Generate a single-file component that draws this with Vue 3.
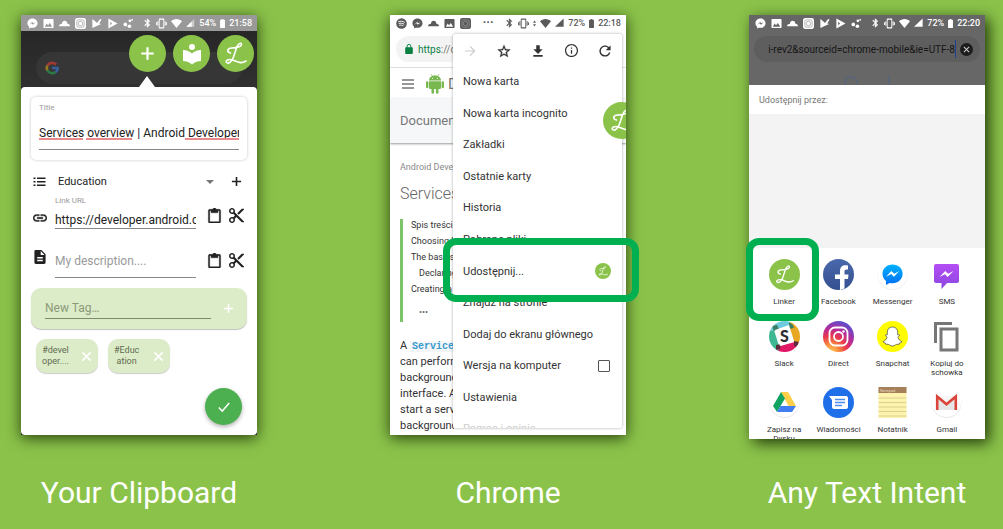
<script setup>
import { ref } from 'vue'

const title = ref('Services overview | Android Developers')
const category = ref('Education')
const link = ref('https://developer.android.com/guide')
const description = ref('')
const newTag = ref('')
const desktop = ref(false)
const query = ref('i-rev2&sourceid=chrome-mobile&ie=UTF-8')

const notifications = ['messenger', 'image', 'cloud', 'camera', 'playcheck', 'play', 'dots']
const chromeNotifications = ['spotify', 'messenger', 'cloud', 'image', 'camera']
const tags = [['#devel', 'oper....'], ['#Educ', 'ation']]
const menuBefore = ['Nowa karta', 'Nowa karta incognito', 'Zakładki', 'Ostatnie karty', 'Historia', 'Pobrane pliki']
const apps = [
  { icon: 'linker', name: 'Linker' },
  { icon: 'facebook', name: 'Facebook' },
  { icon: 'messenger-app', name: 'Messenger' },
  { icon: 'sms', name: 'SMS' },
  { icon: 'slack', name: 'Slack' },
  { icon: 'instagram', name: 'Direct' },
  { icon: 'snapchat', name: 'Snapchat' },
  { icon: 'copy', name: 'Kopiuj do schowka' },
  { icon: 'drive', name: 'Zapisz na Dysku' },
  { icon: 'messages', name: 'Wiadomości' },
  { icon: 'notepad', name: 'Notatnik' },
  { icon: 'gmail', name: 'Gmail' }
]
</script>

<template>
  <svg class="sprite" aria-hidden="true">
    <defs>
      <linearGradient id="fb" x1="0" y1="0" x2="0" y2="1"><stop offset="0" stop-color="#4a68ad" /><stop offset="1" stop-color="#35508f" /></linearGradient>
      <linearGradient id="ms" x1="0" y1="0" x2="0" y2="1"><stop offset="0" stop-color="#00b2ff" /><stop offset="1" stop-color="#0070f5" /></linearGradient>
      <linearGradient id="sm" x1="0" y1="0" x2="0" y2="1"><stop offset="0" stop-color="#b44df5" /><stop offset="1" stop-color="#8b47e0" /></linearGradient>
      <radialGradient id="ig" cx="0.25" cy="1" r="1.05"><stop offset="0" stop-color="#fed05c" /><stop offset="0.25" stop-color="#f88a3c" /><stop offset="0.5" stop-color="#e8364f" /><stop offset="0.72" stop-color="#b52c9b" /><stop offset="1" stop-color="#5a4fd0" /></radialGradient>
      <clipPath id="disc"><circle cx="15.500" cy="15.500" r="15.500" /></clipPath>
    </defs>
    <symbol id="i-messenger" viewBox="0 0 24 24"><path fill-rule="evenodd" d="M12 1C5.500 1 1 5.700 1 11.500c0 3.100 1.400 5.800 3.700 7.600V23l3.600-2c1.100.3 2.400.5 3.700.5 6.500 0 11-4.500 11-10S18.500 1 12 1zM5 14.500l6-6 3 3 5-3-6 6-3-3z" /></symbol>
    <symbol id="i-image" viewBox="0 0 24 24"><path fill-rule="evenodd" d="M23 20V4c0-1.100-.9-2-2-2H3c-1.100 0-2 .9-2 2v16c0 1.100.9 2 2 2h18c1.100 0 2-.9 2-2zM8 12l3 4 4-5 5 8H4z" /></symbol>
    <symbol id="i-cloud" viewBox="0 0 24 24"><path d="M0 18c0-4 3-5 6-5 1-5 3-7 6-7 4 0 6 3 6 6 4 1 6 3 6 6z" /></symbol>
    <symbol id="i-camera" viewBox="0 0 24 24"><rect x="0" y="0" width="24" height="24" rx="5" fill="currentColor" /><rect x="4" y="4" width="16" height="16" rx="4" fill="none" stroke="#999" stroke-width="1.500" /><circle cx="12" cy="12" r="5" fill="none" stroke="#999" stroke-width="1.500" /></symbol>
    <symbol id="i-playcheck" viewBox="0 0 24 24"><path d="M3 2v20l19-9-4-1 5-9-3-1-7 9-4-4z" /></symbol>
    <symbol id="i-play" viewBox="0 0 24 24"><path fill-rule="evenodd" d="M3 1l20 11L3 23zM7 8v8l4-4z" /></symbol>
    <symbol id="i-dots" viewBox="0 0 24 24"><circle cx="5" cy="14" r="4" /><circle cx="15" cy="6" r="3" /><circle cx="14" cy="18" r="4" /><circle cx="20" cy="4" r="2" /></symbol>
    <symbol id="i-spotify" viewBox="0 0 24 24"><circle cx="12" cy="12" r="11.500" /><path d="M5 8c5-1.500 10-1 14 1.500M6 12c4-1 8-.5 12 1.500M7 16c3-1 6-.5 9 1" fill="none" stroke="#fff" stroke-width="2" /></symbol>
    <symbol id="i-bluetooth" viewBox="4 0 16 24"><path d="M17.710 7.710L12 2h-1v7.590L6.410 5 5 6.410 10.590 12 5 17.590 6.410 19 11 14.410V22h1l5.710-5.710-4.300-4.290zM13 5.830l1.880 1.880L13 9.590zm1.880 10.460L13 18.170v-3.760z" stroke="currentColor" /></symbol>
    <symbol id="i-vibrate" viewBox="0 0 24 24"><path fill-rule="evenodd" d="M0 15h2V9H0zm3 2h2V7H3zm19-8v6h2V9zm-3 8h2V7h-2zM16.500 1h-9C6.700 1 6 1.700 6 2.500v19c0 .8.700 1.500 1.500 1.500h9c.8 0 1.500-.7 1.500-1.500v-19c0-.8-.7-1.500-1.500-1.500zM16 20H8V4h8z" /></symbol>
    <symbol id="i-updown" viewBox="0 0 8 24"><path d="M0 10l4-6 4 6zm0 4l4 6 4-6z" /></symbol>
    <symbol id="i-wifi" viewBox="0 0 24 24"><path d="M12 22L0 7c3.500-3 7.500-5 12-5s8.500 2 12 5z" /></symbol>
    <symbol id="i-signal" viewBox="0 0 24 24"><path d="M1 22h21V1z" opacity=".5" /><path d="M1 22h14V8z" /></symbol>
    <symbol id="i-signalfull" viewBox="0 0 24 24"><path d="M0 22h23V0z" /></symbol>
    <symbol id="i-battery" viewBox="0 0 12 22"><path d="M4 0h4v2h3q1 0 1 1v18q0 1-1 1H1q-1 0-1-1V3q0-1 1-1h3z" /></symbol>
    <symbol id="i-google" viewBox="0 0 24 24"><g fill="none" stroke-width="4.500"><path d="M19 6A9.500 9.500 0 0 0 4 8" stroke="#9c3a33" /><path d="M4 8a9.500 9.500 0 0 0 0 8" stroke="#9a7a20" /><path d="M4 16a9.500 9.500 0 0 0 14 3" stroke="#2c7a43" /><path d="M18 19c3-2 4-5 3.500-7H12" stroke="#38609f" /></g></symbol>
    <symbol id="i-plus" viewBox="0 0 24 24"><path d="M12 2v20M2 12h20" fill="none" stroke="currentColor" stroke-width="3.500" /></symbol>
    <symbol id="i-close" viewBox="0 0 24 24"><path d="M3 3l18 18M21 3L3 21" fill="none" stroke="currentColor" stroke-width="3.500" /></symbol>
    <symbol id="i-check" viewBox="0 0 24 24"><path d="M3 13l6 6L21 5" fill="none" stroke="currentColor" stroke-width="2.500" /></symbol>
    <symbol id="i-library" viewBox="0 0 24 24"><path d="M12 11.550C9.640 9.350 6.480 8 3 8v11c3.480 0 6.640 1.350 9 3.550 2.360-2.190 5.520-3.550 9-3.550V8c-3.480 0-6.640 1.350-9 3.550zM12 8a3 3 0 1 0 0-6 3 3 0 0 0 0 6z" /></symbol>
    <symbol id="i-script" viewBox="0 0 37 37"><path d="M13.500 18C9.500 17 10 13.500 14.500 13c5-.3 10-1 10-3.500C24.300 7 21 8.500 19.500 13l-3 9c-1.500 4.500-5 7.300-7 5.500-1.300-2 2-3.700 6-2.500 4.500 1.500 8 4.500 13.500 1" fill="none" stroke="#fff" stroke-width="1.600" stroke-linecap="round" /></symbol>
    <symbol id="i-list" viewBox="0 0 24 20"><path d="M0 1h4v3H0zm7 0h17v3H7zM0 8h4v3H0zm7 0h17v3H7zM0 15h4v3H0zm7 0h17v3H7z" /></symbol>
    <symbol id="i-link" viewBox="2 5 20 14"><path d="M3.900 12c0-1.710 1.390-3.100 3.100-3.100h4V7H7c-2.760 0-5 2.240-5 5s2.240 5 5 5h4v-1.900H7c-1.710 0-3.100-1.390-3.100-3.100zM8 13h8v-2H8zm9-6h-4v1.900h4c1.710 0 3.100 1.390 3.100 3.100s-1.390 3.100-3.100 3.100h-4V17h4c2.760 0 5-2.240 5-5s-2.240-5-5-5z" stroke="currentColor" stroke-width=".5" /></symbol>
    <symbol id="i-paste" viewBox="2 0 20 22"><path d="M19 2h-4.180C14.400.84 13.300 0 12 0c-1.300 0-2.400.84-2.820 2H5c-1.100 0-2 .9-2 2v16c0 1.100.9 2 2 2h14c1.100 0 2-.9 2-2V4c0-1.100-.9-2-2-2zm0 18H5V4h2v3h10V4h2z" stroke="currentColor" stroke-width=".6" /></symbol>
    <symbol id="i-cut" viewBox="2 2 20 20"><path d="M9.640 7.640c.23-.5.36-1.050.36-1.640 0-2.210-1.790-4-4-4S2 3.790 2 6s1.790 4 4 4c.59 0 1.140-.13 1.640-.36L10 12l-2.360 2.360C7.140 14.130 6.590 14 6 14c-2.210 0-4 1.790-4 4s1.790 4 4 4 4-1.790 4-4c0-.59-.13-1.140-.36-1.640L12 14l7 7h3v-1zM6 8c-1.100 0-2-.89-2-2s.9-2 2-2 2 .89 2 2-.9 2-2 2zm0 12c-1.100 0-2-.89-2-2s.9-2 2-2 2 .89 2 2-.9 2-2 2zM19 3l-6 6 2 2 7-7V3z" /></symbol>
    <symbol id="i-doc" viewBox="4 2 16 20"><path fill-rule="evenodd" d="M14 2H6c-1.100 0-2 .9-2 2v16c0 1.100.9 2 2 2h12c1.100 0 2-.9 2-2V8zm2 16H8v-2h8zm0-4H8v-2h8zm-3-5V3.500L18.500 9z" /></symbol>
    <symbol id="i-forward" viewBox="0 0 24 24"><path d="M3 12h17M12 4l8 8-8 8" fill="none" stroke="currentColor" stroke-width="2" /></symbol>
    <symbol id="i-star" viewBox="1 1 22 21"><path d="M22 9.240l-7.190-.62L12 2 9.190 8.630 2 9.240l5.460 4.730L5.820 21 12 17.270 18.180 21l-1.630-7.030zM12 15.400l-3.760 2.270 1-4.280-3.320-2.880 4.380-.38L12 6.100l1.710 4.040 4.380.38-3.320 2.880 1 4.280z" stroke="currentColor" stroke-width=".5" /></symbol>
    <symbol id="i-download" viewBox="0 0 24 24"><path d="M20 9h-5V2H9v7H4l8 8zM4 19v3h16v-3z" /></symbol>
    <symbol id="i-info" viewBox="0 0 24 24"><path d="M11 17h2v-6h-2zm1-15.500C6.200 1.500 1.500 6.200 1.500 12S6.200 22.500 12 22.500 22.500 17.800 22.500 12 17.800 1.500 12 1.500zm0 19c-4.700 0-8.500-3.800-8.500-8.500S7.300 3.500 12 3.500s8.500 3.800 8.500 8.500-3.800 8.500-8.500 8.500zM11 9h2V7h-2z" fill-rule="evenodd" /></symbol>
    <symbol id="i-refresh" viewBox="2 2 20 20"><path d="M17.650 6.350C16.200 4.900 14.210 4 12 4c-4.420 0-7.990 3.580-7.990 8s3.570 8 7.990 8c3.730 0 6.840-2.550 7.730-6h-2.080c-.82 2.330-3.040 4-5.650 4-3.310 0-6-2.690-6-6s2.690-6 6-6c1.660 0 3.140.69 4.220 1.780L13 11h7V4z" /></symbol>
    <symbol id="i-lock" viewBox="4 1 16 21"><path d="M18 8h-1V6c0-2.760-2.240-5-5-5S7 3.240 7 6v2H6c-1.100 0-2 .9-2 2v10c0 1.100.9 2 2 2h12c1.100 0 2-.9 2-2V10c0-1.100-.9-2-2-2zm-2.900 0H8.900V6c0-1.710 1.390-3.100 3.100-3.100s3.100 1.390 3.100 3.100z" /></symbol>
    <symbol id="i-burger" viewBox="0 0 12 10"><path d="M0 1h12M0 5h12M0 9h12" stroke="currentColor" stroke-width="1.500" /></symbol>
    <symbol id="i-android" viewBox="0 0 18 20"><path d="M3 6.500C3 3.500 5.700 1.500 9 1.500s6 2 6 5zM3 7.300h12V14q0 1-1 1h-1.500v3.500a1.300 1.300 0 0 1-2.600 0V15H8.100v3.500a1.300 1.300 0 0 1-2.600 0V15H4q-1 0-1-1zM0 8.500a1.200 1.200 0 0 1 2.400 0V13A1.200 1.200 0 0 1 0 13zM15.600 8.500a1.200 1.200 0 0 1 2.400 0V13a1.200 1.200 0 0 1-2.400 0z" /><path d="M5 0l1.500 2.500M13 0l-1.500 2.500" stroke="currentColor" stroke-width=".6" /><circle cx="6.500" cy="4.300" r=".6" fill="#fff" /><circle cx="11.500" cy="4.300" r=".6" fill="#fff" /></symbol>

    <symbol id="i-linker" viewBox="0 0 37 37"><circle cx="18.500" cy="18.500" r="18.500" fill="#8bc34a" /><use href="#i-script" width="37" height="37" /></symbol>
    <symbol id="i-facebook" viewBox="0 0 31 31"><circle cx="15.500" cy="15.500" r="15.500" fill="url(#fb)" /><path d="M17 31V20h-5v-4.500h5V12c0-4.500 3-6.500 8-5.600v4.100c-3-.3-3.500.6-3.500 2.300v2.700h4L25 20h-3.500v9.500z" fill="#fff" /></symbol>
    <symbol id="i-messenger-app" viewBox="0 0 31 31"><circle cx="15.500" cy="16" r="15" fill="#ececec" /><circle cx="15.500" cy="15.200" r="14.800" fill="#fff" /><path d="M15.500 5.500c-5.700 0-10 4-10 9.200 0 3 1.300 5.500 3.500 7.200v4l3.600-2c1 .2 1.900.3 2.900.3 5.700 0 10.100-4.200 10.100-9.500s-4.400-9.200-10.100-9.200z" fill="url(#ms)" /><path d="M9 17.700l5.300-5.600 3 2.600 5-2.600-5.400 5.600-2.700-2.600z" fill="#fff" /></symbol>
    <symbol id="i-sms" viewBox="0 0 31 31"><path d="M5 5h21q2 0 2 2v15q0 2-2 2H16l-5.500 6v-6H5q-2 0-2-2V7q0-2 2-2z" fill="url(#sm)" /><path d="M8.500 18l5.700-6 3 2.800 5.300-2.800-5.800 6-2.700-2.700z" fill="#fff" /></symbol>
    <symbol id="i-slack" viewBox="0 0 31 31"><g clip-path="url(#disc)"><path d="M0 0h31v31H0z" fill="#fff" /><path d="M0 0h21L20 5 6 9 0 10z" fill="#6ecadc" /><path d="M21 0h10v22l-6-1-5-14z" fill="#e8a723" /><path d="M31 22v9H8l3-6 15-4z" fill="#e01765" /><path d="M0 10l5-1 5 16-1 6H0z" fill="#3db892" /><path d="M3 5l5-1 2 4-5 2zM20 1l4 3 1 3-5 1z" fill="#3a7f66" /><path d="M25 20l5 1-2 5-3-1zM7 24l5-1-1 5-4 1z" fill="#5e2d3d" /><path d="M6 9l14-5 5 16-14 5z" fill="#fff" /></g><text x="15.500" y="21" text-anchor="middle" font-family="Lato, sans-serif" font-weight="900" font-size="16" fill="#2b2b30">S</text></symbol>
    <symbol id="i-instagram" viewBox="0 0 31 31"><circle cx="15.500" cy="15.500" r="15.500" fill="url(#ig)" /><g fill="none" stroke="#fff" stroke-width="1.800"><rect x="6.500" y="6.500" width="18" height="18" rx="5.500" /><circle cx="15.500" cy="15.500" r="4.500" /></g><circle cx="20.500" cy="10.500" r="1.200" fill="#fff" /></symbol>
    <symbol id="i-snapchat" viewBox="0 0 31 31"><circle cx="15.500" cy="15.500" r="15.500" fill="#fffc00" /><path d="M15.500 6c-3.300 0-5.200 2.300-5.200 5.200v2.600c-.8.3-1.700-.5-1.900.4-.1.900 1.500 1.200 1.700 2-.7 2.300-2 3.600-4 4.300-.3 1 1.700 1.400 2.500 1.600l.4 1.300c1.300 0 2.300-.3 3.400.4 1 .7 1.800 1.300 3.100 1.300s2.100-.6 3.100-1.300c1.100-.7 2.100-.4 3.400-.4l.4-1.300c.8-.2 2.800-.6 2.500-1.600-2-.7-3.300-2-4-4.300.2-.8 1.800-1.100 1.700-2-.2-.9-1.100-.1-1.900-.4v-2.600c0-2.900-1.900-5.200-5.200-5.200z" fill="#fff" stroke="#555" stroke-width=".8" /></symbol>
    <symbol id="i-copy" viewBox="0 0 31 31"><path d="M4.500 22V2.500H21M10 8h16v21H10z" fill="none" stroke="#777" stroke-width="3" /></symbol>
    <symbol id="i-drive" viewBox="0 0 31 31"><circle cx="15.500" cy="16" r="15" fill="#e4e4e4" /><circle cx="15.500" cy="15.200" r="14.800" fill="#fff" /><path d="M12 5h7l8 14h-7.500z" fill="#ffcf48" /><path d="M12 5l4 6.500L8 25l-4-6z" fill="#11a361" /><path d="M11.500 19H27l-4 6H8z" fill="#3f7df0" /></symbol>
    <symbol id="i-messages" viewBox="0 0 31 31"><circle cx="15.500" cy="15.500" r="15.500" fill="#1f70e8" /><path d="M6 9h17q2 0 2 2v9q0 2-2 2H11q-2 0-2-2v-7z" fill="#fff" /><path d="M12 12.500h10M12 15.500h10M12 18.500h7" stroke="#4c8cf0" stroke-width="1.300" /></symbol>
    <symbol id="i-notepad" viewBox="0 0 31 31"><path d="M1.500 0h28v31h-28z" fill="#fbf3ae" /><path d="M1.500 0h28v6h-28z" fill="#a5805a" /><path d="M1.500 11h28M1.500 15.500h28M1.500 20h28M1.500 24.500h28M1.500 29h28" stroke="#ded08a" stroke-width="1" /><text x="3" y="4.500" font-family="Roboto, sans-serif" font-size="4" fill="#ead9bd">Notepad</text></symbol>
    <symbol id="i-gmail" viewBox="0 0 31 31"><circle cx="15.500" cy="16" r="15" fill="#e4e4e4" /><circle cx="15.500" cy="15.200" r="14.800" fill="#fff" /><path d="M6 9h19v14H6z" fill="#e6e6e6" /><path d="M6 9h19l-9.500 8z" fill="#f6f6f6" /><path d="M6.200 23V9.500l9.300 7.800 9.300-7.800V23" fill="none" stroke="#d9453a" stroke-width="2.600" /></symbol>
  </svg>

  <main class="page">
    <figure class="shot clipboard">
      <div class="device">
        <div class="screen">
          <div class="status light">
            <span class="group"><svg v-for="n in notifications" :key="n" class="s11"><use :href="'#i-' + n" /></svg></span>
            <span class="group tight">
              <svg class="s9"><use href="#i-bluetooth" /></svg><svg class="s11"><use href="#i-vibrate" /></svg><svg class="s11"><use href="#i-wifi" /></svg><svg class="s9"><use href="#i-signal" /></svg>
              <span>54%</span><svg class="batt"><use href="#i-battery" /></svg><time>21:58</time>
            </span>
          </div>
          <div class="hero">
            <div class="searchpill"><svg class="s14"><use href="#i-google" /></svg></div>
            <button class="round active" aria-label="Add"><svg class="s15"><use href="#i-plus" /></svg></button>
            <button class="round" aria-label="Library"><svg class="s24"><use href="#i-library" /></svg></button>
            <button class="round" aria-label="Linker"><svg class="s37"><use href="#i-script" /></svg></button>
          </div>
          <form class="sheet" @submit.prevent>
            <div class="card">
              <label for="title">Title</label>
              <div class="spell">
                <input id="title" v-model="title" class="line" type="text" />
                <span class="marks"><i class="w44"></i><i class="w46"></i><i class="last"></i></span>
              </div>
            </div>
            <div class="row category">
              <svg class="listicon"><use href="#i-list" /></svg>
              <div class="pick">
                <select v-model="category" aria-label="Category"><option>Education</option></select>
              </div>
              <button class="bare" aria-label="Add category"><svg class="s11"><use href="#i-plus" /></svg></button>
            </div>
            <div class="row url">
              <svg class="linkicon"><use href="#i-link" /></svg>
              <div class="field"><label for="url">Link URL</label><input id="url" v-model="link" class="line" type="text" /></div>
              <button class="bare" aria-label="Paste link"><svg class="s15"><use href="#i-paste" /></svg></button>
              <button class="bare" aria-label="Cut link"><svg class="s15"><use href="#i-cut" /></svg></button>
            </div>
            <div class="row desc">
              <svg class="s14"><use href="#i-doc" /></svg>
              <input v-model="description" class="line" type="text" aria-label="Description" placeholder="My description...." />
              <button class="bare" aria-label="Paste description"><svg class="s15"><use href="#i-paste" /></svg></button>
              <button class="bare" aria-label="Cut description"><svg class="s15"><use href="#i-cut" /></svg></button>
            </div>
            <div class="newtag">
              <input v-model="newTag" class="line" type="text" aria-label="New tag" placeholder="New Tag…" />
              <button class="bare white" aria-label="Add tag"><svg class="s11"><use href="#i-plus" /></svg></button>
            </div>
            <div class="chips">
              <span v-for="t in tags" :key="t[0]" class="chip">
                <span>{{ t[0] }}<br />{{ t[1] }}</span>
                <button class="bare white" :aria-label="'Remove ' + t[0] + t[1]"><svg class="s11"><use href="#i-close" /></svg></button>
              </span>
            </div>
            <button class="fab" aria-label="Save"><svg class="s14"><use href="#i-check" /></svg></button>
          </form>
        </div>
      </div>
      <figcaption>Your Clipboard</figcaption>
    </figure>

    <figure class="shot chrome">
      <div class="device">
        <div class="screen">
          <div class="status dark">
            <span class="group"><svg v-for="n in chromeNotifications" :key="n" class="s11"><use :href="'#i-' + n" /></svg></span>
            <span class="more">···</span>
            <span class="group tight">
              <svg class="s9"><use href="#i-bluetooth" /></svg><svg class="s11"><use href="#i-vibrate" /></svg><svg class="arrows"><use href="#i-updown" /></svg><svg class="s11"><use href="#i-wifi" /></svg><svg class="s9"><use href="#i-signalfull" /></svg>
              <span>72%</span><svg class="batt"><use href="#i-battery" /></svg><time>22:18</time>
            </span>
          </div>
          <div class="toolbar"><div class="omnibox"><svg class="lock"><use href="#i-lock" /></svg><span><b>https</b>://d</span></div></div>
          <div class="site"><svg class="burger"><use href="#i-burger" /></svg><svg class="android"><use href="#i-android" /></svg><span class="brand">D</span></div>
          <div class="band">Documen</div>
          <article>
            <p class="crumb">Android Devel</p>
            <h1>Services</h1>
            <ul class="toc">
              <li>Spis treści</li><li>Choosing b</li><li>The basics</li><li class="in">Declaring</li><li>Creating a s</li><li class="in dots">•••</li>
            </ul>
            <p class="body">A <code>Service</code><br />can perform<br />background<br />interface. A<br />start a serv<br />background</p>
          </article>
          <nav class="menu" aria-label="Chrome">
            <div class="actions">
              <button class="bare pale" aria-label="Dalej"><svg class="s14"><use href="#i-forward" /></svg></button>
              <button class="bare" aria-label="Zakładka"><svg class="s14"><use href="#i-star" /></svg></button>
              <button class="bare" aria-label="Pobierz"><svg class="s14"><use href="#i-download" /></svg></button>
              <button class="bare" aria-label="Informacje"><svg class="s15"><use href="#i-info" /></svg></button>
              <button class="bare" aria-label="Odśwież"><svg class="s14"><use href="#i-refresh" /></svg></button>
            </div>
            <ul class="items">
              <li v-for="m in menuBefore" :key="m"><a href="#">{{ m }}</a></li>
              <li><a href="#">Udostępnij...<svg class="s16"><use href="#i-linker" /></svg></a></li>
              <li><a href="#">Znajdź na stronie</a></li>
              <li><a href="#">Dodaj do ekranu głównego</a></li>
              <li><label>Wersja na komputer<input v-model="desktop" type="checkbox" /></label></li>
              <li><a href="#">Ustawienia</a></li>
              <li class="fading"><a href="#">Pomoc i opinie</a></li>
            </ul>
          </nav>
          <button class="round floating" aria-label="Linker"><svg class="s37"><use href="#i-script" /></svg></button>
        </div>
        <div class="ring share"></div>
      </div>
      <figcaption>Chrome</figcaption>
    </figure>

    <figure class="shot intent">
      <div class="device">
        <div class="screen">
          <div class="status light dim">
            <span class="group"><svg v-for="n in notifications" :key="n" class="s11"><use :href="'#i-' + n" /></svg></span>
            <span class="group tight">
              <svg class="s9"><use href="#i-bluetooth" /></svg><svg class="s11"><use href="#i-vibrate" /></svg><svg class="s11"><use href="#i-wifi" /></svg><svg class="s9"><use href="#i-signalfull" /></svg>
              <span>72%</span><svg class="batt"><use href="#i-battery" /></svg><time>22:20</time>
            </span>
          </div>
          <div class="dimmed">
            <div class="address">
              <input v-model="query" type="text" aria-label="Address" />
              <button class="clear" aria-label="Clear"><svg class="s7"><use href="#i-close" /></svg></button>
            </div>
            <div class="doodle" aria-hidden="true"><i></i><i></i></div>
          </div>
          <h2>Udostępnij przez:</h2>
          <div class="blank"></div>
          <ul class="apps">
            <li v-for="a in apps" :key="a.name"><a href="#"><svg class="s31"><use :href="'#i-' + a.icon" /></svg><span>{{ a.name }}</span></a></li>
          </ul>
        </div>
        <div class="ring linker"></div>
      </div>
      <figcaption>Any Text Intent</figcaption>
    </figure>
  </main>
</template>

<style>
body { margin: 0; background: #8bc34a; }
</style>

<style scoped>
* { box-sizing: border-box; }
.sprite { position: absolute; width: 0; height: 0; }
.page {
  display: grid;
  grid-template-columns: 21fr 236fr 133fr 236fr 123fr 236fr 18fr;
  min-height: 100vh;
  padding: 15px 0 18px;
  background: #8bc34a;
  font-family: Roboto, "Noto Sans", sans-serif;
  color: #333;
  overflow: hidden;
}
.shot { margin: 0; display: flex; flex-direction: column; min-width: 0; }
.clipboard { grid-column: 2; }
.chrome { grid-column: 4; }
.intent { grid-column: 6; }
figcaption { margin-top: auto; line-height: 36px; font-size: 30px; color: #fff; text-align: center; white-space: nowrap; }
.device { position: relative; box-shadow: 0 3px 14px rgba(20, 40, 0, .85); }
.intent .device { box-shadow: 4px 4px 14px rgba(20, 40, 0, .9); }
.screen { position: relative; overflow: hidden; background: #fff; }
.clipboard .screen { background: #222; }
svg { display: block; flex: none; fill: currentColor; }
button, input, select { font-family: inherit; margin: 0; padding: 0; border: 0; color: inherit; outline: none; }
a { color: inherit; text-decoration: none; }
ul, p, h1, h2 { margin: 0; padding: 0; list-style: none; font-weight: 400; }

.s7 { width: 7px; height: 7px; }
.s9 { width: 9px; height: 10px; }
.s11 { width: 11px; height: 11px; }
.s14 { width: 14px; height: 14px; }
.s15 { width: 15px; height: 15px; }
.s16 { width: 16px; height: 16px; }
.s24 { width: 24px; height: 24px; }
.s31 { width: 31px; height: 31px; }
.s37 { width: 37px; height: 37px; }
.batt { width: 5px; height: 9px; }
.arrows { width: 3px; height: 9px; }

.status { display: flex; align-items: center; justify-content: space-between; height: 16px; padding: 0 5px 0 6px; font-size: 9px; font-weight: 500; line-height: 16px; }
.group { display: flex; align-items: center; gap: 5px; }
.group.tight { gap: 4px; }
.light { color: #fff; background: #999; }
.dark { color: #5a5a5a; }
.dim { background: #666; }
.more { font-size: 12px; font-weight: 700; }

.hero { position: relative; display: flex; justify-content: flex-end; gap: 7px; height: 56px; padding: 4px 3px 0 0; background: linear-gradient(#272727, #303030); }
.searchpill { position: absolute; left: 15px; right: 15px; top: 21px; height: 32px; padding: 9px; border-radius: 16px; background: #363636; }
.round { position: relative; width: 37px; height: 37px; display: grid; place-items: center; border-radius: 50%; background: #8bc34a; color: #fff; }
.round.active::after { content: ""; position: absolute; top: 41px; left: 10px; border: 8px solid transparent; border-top: 0; border-bottom: 11px solid #fff; }
.sheet { display: flex; flex-direction: column; padding: 10px 10px 10px; background: #fff; border-radius: 4px; color: #222; }
.sheet label { display: block; font-size: 8px; line-height: 10px; color: #999; }
.line { display: block; width: 100%; height: 18px; background: none; border-bottom: 1px solid #888; border-radius: 0; font-size: 12px; }
.line::placeholder { color: #999; opacity: 1; }
.card { padding: 6px 8px 10px; border-radius: 5px; box-shadow: 0 0 3px rgba(0, 0, 0, .25); }
.spell { position: relative; margin-top: 11px; }
.spell .line { height: 26px; padding-bottom: 7px; }
.marks { position: absolute; left: 0; right: 0; top: 14px; display: flex; gap: 3px; }
.marks i { height: 2px; background: #e88a8c; }
.w44 { width: 44px; }
.w46 { width: 46px; }
.last { width: 54px; margin-left: auto; }
.row { display: grid; grid-template-columns: 14px minmax(0, 1fr) 33px 15px; padding: 0 3px 0 2px; }
.bare { display: grid; place-items: center; background: none; color: #222; }
.white { color: #fff; }
.pale { color: #ccc !important; }
.row.category { grid-template-columns: 14px minmax(0, 1fr) 15px; column-gap: 8px; align-items: center; height: 17px; margin-top: 13px; }
.listicon { width: 13px; height: 10px; }
.pick { position: relative; margin-right: 7px; }
.pick::after { content: ""; position: absolute; right: 0; top: 7px; border: 4px solid transparent; border-top-color: #777; border-bottom: 0; }
.pick select { display: block; width: 100%; height: 17px; padding-left: 3px; appearance: none; background: none; font-size: 11px; }
.url { margin-top: 6px; align-items: end; }
.field { min-width: 0; }
.url .field, .desc .line { margin-left: 8px; width: auto; }
.url .line { height: 18px; margin-top: 5px; }
.url .bare, .desc .bare { margin-left: 11px; width: 15px; }
.url .bare:last-child, .desc .bare:last-child { margin-left: 0; width: 15px; }
.url .bare { margin-bottom: 6px; }
.linkicon { width: 14px; height: 10px; margin-bottom: 6px; }
.desc { margin-top: 21px; align-items: start; }
.desc .line { height: 28px; padding-bottom: 5px; }
.desc .bare { margin-top: 3px; }
.newtag { display: flex; align-items: center; gap: 12px; height: 41px; margin-top: 10px; padding: 0 13px 0 14px; border-radius: 10px; background: #dcebc8; box-shadow: 0 1px 1px rgba(0, 0, 0, .25); }
.newtag .line { flex: 1; min-width: 0; height: 20px; border-color: #7d8a6c; }
.newtag .line::placeholder { color: #8b9a79; }
.chips { display: flex; gap: 10px; margin-top: 10px; padding-left: 5px; }
.chip { display: flex; align-items: center; justify-content: space-between; width: 62px; height: 34px; padding: 0 6px; border-radius: 10px; background: #dcebc8; box-shadow: 0 1px 1px rgba(0, 0, 0, .2); font-size: 9px; line-height: 11px; text-align: center; color: #5f6b52; }
.fab { width: 37px; height: 37px; margin: 15px 5px 0 auto; display: grid; place-items: center; border-radius: 50%; background: #4caf50; color: #fff; box-shadow: 0 2px 4px rgba(0, 0, 0, .3); }

.toolbar { padding: 5px 6px; border-bottom: 1px solid #ddd; }
.omnibox { display: flex; align-items: center; gap: 5px; height: 26px; padding: 0 9px; border-radius: 13px; background: #f3f3f3; white-space: nowrap; font-size: 10px; color: #777; }
.omnibox b { color: #0b8043; font-weight: 400; }
.lock { width: 8px; height: 10px; color: #0b8043; }
.site { display: flex; align-items: center; height: 30px; padding: 2px 12px 0; font-size: 15px; color: #777; }
.burger { width: 12px; height: 10px; }
.android { width: 18px; height: 20px; margin: 0 4px 0 12px; color: #78b84e; }
.brand { width: 5px; overflow: hidden; }
.band { padding-left: 10px; height: 45px; line-height: 45px; background: #f6f7f8; box-shadow: 0 1px 2px rgba(0, 0, 0, .4); font-size: 13px; color: #777; }
article { width: 64px; overflow: hidden; padding: 18px 0 1px 10px; white-space: nowrap; }
.crumb { font-size: 9px; line-height: 12px; color: #888; }
h1 { margin-top: 9px; font-size: 16px; line-height: 24px; font-weight: 300; color: #666; }
.toc { display: flex; flex-direction: column; gap: 4px; margin-top: 13px; padding: 0 0 4px 8px; border-left: 3px solid #7cc36a; font-size: 9px; line-height: 12px; }
.in { padding-left: 8px; }
.dots { margin-top: 7px; color: #666; }
.body { margin-top: 16px; font-size: 11px; line-height: 16px; }
code { font: 700 10px/12px "Liberation Mono", monospace; color: #3a9bd0; background: #f5f6f7; padding: 0 2px; }
.menu { position: absolute; top: 19px; right: 4px; bottom: 7px; width: 169px; display: flex; flex-direction: column; overflow: hidden; background: #fff; border-radius: 2px; box-shadow: 0 0 3px rgba(0, 0, 0, .35); }
.actions { display: flex; justify-content: space-between; padding: 9px 10px 8px; height: 32px; }
.actions .bare { width: 14px; color: #333; }
.items { flex: 1; display: grid; grid-template-rows: repeat(11, minmax(0, 1fr)) 15px; font-size: 11px; }
.items a, .items label { display: flex; align-items: center; justify-content: space-between; height: 100%; padding: 0 11px 0 10px; }
.items .fading { color: #ccc; }
.items .fading a { align-items: flex-start; padding-top: 9px; }
.items input { appearance: none; width: 12px; height: 12px; margin-right: 1px; border: 1px solid #555; border-radius: 1px; }
.floating { position: absolute; right: -3px; right: -14px; top: 87px; }
.ring { position: absolute; border: 7px solid #00af50; border-radius: 13px; }
.share { left: 53px; right: -13px; top: 223px; height: 64px; }
.linker { left: -3px; top: 223px; width: 73px; height: 83px; }

.dimmed { height: 54px; padding: 5px 5px 0; background: #676767; overflow: hidden; }
.address { display: flex; align-items: center; gap: 4px; height: 26px; padding: 0 7px 0 6px; border-radius: 13px; background: #5e5e5e; }
.address input { flex: 1; min-width: 0; height: 18px; background: none; border-right: 1px solid #22408f; font-size: 10px; color: #161616; text-align: right; }
.clear { width: 13px; height: 13px; display: grid; place-items: center; border-radius: 50%; background: #1c1c1c; color: #ccc; }
.doodle { display: flex; justify-content: center; gap: 30px; margin-top: 14px; }
.doodle i { width: 14px; height: 14px; border: 2px solid #5b6577; border-radius: 50%; }
.doodle i:last-child { width: 2px; border-width: 1px; border-radius: 0; }
h2 { height: 29px; padding-left: 10px; line-height: 30px; font-size: 9px; color: #777; }
.blank { height: 134px; background: #f3f3f3; }
.apps { display: grid; grid-template-columns: repeat(4, 1fr); height: 191px; grid-template-rows: 62px 66px 60px; padding: 11px 11px 0 8px; font-size: 8px; line-height: 9px; text-align: center; overflow: hidden; }
.apps a { display: flex; flex-direction: column; align-items: center; gap: 7px; }
.apps span { max-width: 44px; }
</style>
